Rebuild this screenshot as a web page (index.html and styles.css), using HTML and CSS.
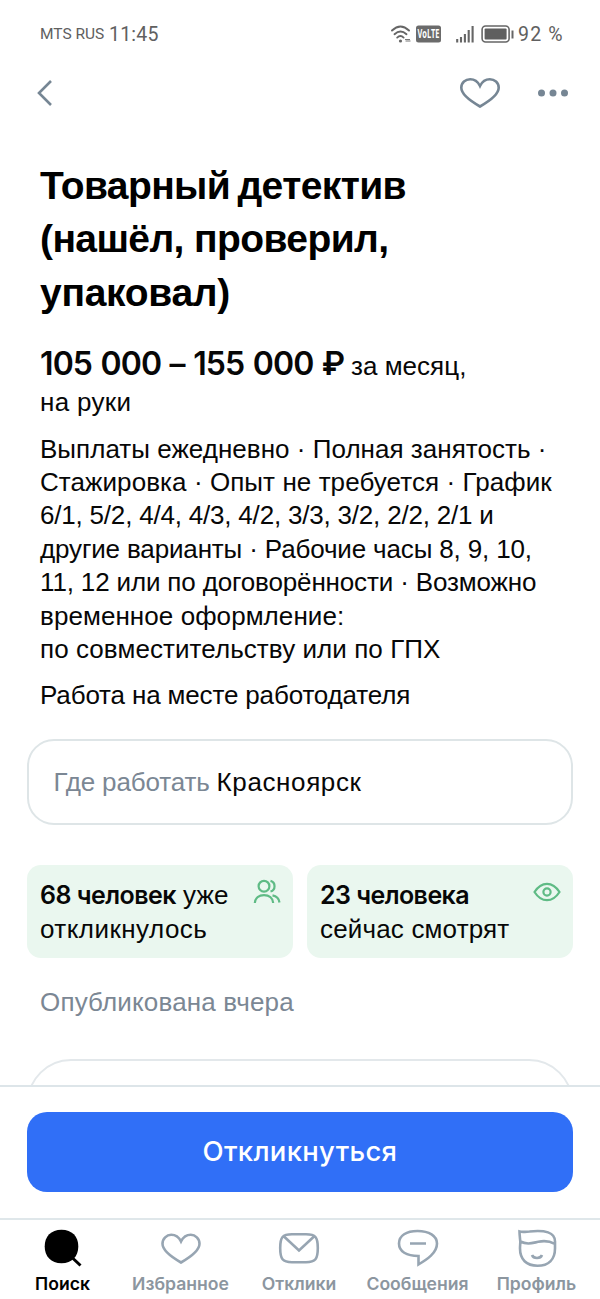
FILE: index.html
```
<!DOCTYPE html>
<html lang="ru">
<head>
<meta charset="utf-8">
<title>Товарный детектив</title>
<link rel="stylesheet" href="styles.css">
</head>
<body>
<div class="screen">
  <div class="scroll">
    <div class="status">
      <span class="carrier">MTS RUS</span>
      <span class="clock">11:45</span>
      <svg class="status-icons" width="126" height="20" viewBox="0 0 126 20">
        <g fill="none" stroke="#666" stroke-width="1.9" stroke-linecap="round">
          <path d="M2 6.500Q10.500-1.500 19 6.500"/>
          <path d="M4.500 10.200Q10.500 4.600 16.500 10.200"/>
          <path d="M7.200 13.600Q10.500 10.600 13.600 13.600"/>
        </g>
        <circle cx="10.500" cy="17" r="1.600" fill="#666"/>
        <path d="M15 15.500h5M15.500 17h5" stroke="#777" stroke-width="1.200"/>
        <rect x="26" y="1.500" width="25" height="17" rx="2.500" fill="#6b6b6b"/>
        <text class="volte" x="38.500" y="14" text-anchor="middle" textLength="22" lengthAdjust="spacingAndGlyphs">VoLTE</text>
        <path d="M67.200 18.500v-3.500M71 18.500v-5.500M74.900 18.500v-8.500M78.700 18.500V6M82.600 18.500V2" stroke="#666" stroke-width="2.100"/>
        <rect x="92.100" y="2" width="27" height="16" rx="3.500" fill="none" stroke="#666" stroke-width="1.600"/>
        <rect x="94.600" y="4.500" width="22" height="11" rx="1" fill="#5f5f5f"/>
        <path d="M122.500 6.500v8" stroke="#666" stroke-width="2"/>
      </svg>
      <span class="percent">92 %</span>
    </div>

    <div class="toolbar">
      <svg width="17" height="28" viewBox="0 0 17 28"><path d="M15 2 3 14l12 12" fill="none" stroke="#768694" stroke-width="2.600"/></svg>
      <svg class="like" width="42" height="32" viewBox="0 0 42 32"><path d="M21 29.500C14 25.500 2.300 18.600 2.300 10.800 2.300 5.500 6.500 2.300 11.200 2.300c4.300 0 7.800 2.700 9.800 6.700 2-4 5.500-6.700 9.800-6.700 4.700 0 8.900 3.200 8.900 8.500C39.700 18.600 28 25.500 21 29.500Z" fill="none" stroke="#768694" stroke-width="2.600"/></svg>
      <svg width="32" height="8" viewBox="0 0 32 8" fill="#768694"><circle cx="4.500" cy="4" r="3.500"/><circle cx="16" cy="4" r="3.500"/><circle cx="27.500" cy="4" r="3.500"/></svg>
    </div>

    <h1 class="title">
      <span class="line t1">Товарный детектив</span>
      <span class="line t2">(нашёл, проверил,</span>
      <span class="line t3">упаковал)</span>
    </h1>

    <div class="salary"><span class="amount">105 000 – 155 000 ₽</span><span class="s4">за месяц,</span></div>
    <div class="text s7">на руки</div>

    <p class="text terms">
      <span class="line s4">Выплаты ежедневно · Полная занятость ·</span>
      <span class="line s5">Стажировка · Опыт не требуется · График</span>
      <span class="line s1">6/1, 5/2, 4/4, 4/3, 4/2, 3/3, 3/2, 2/2, 2/1 и</span>
      <span class="line s2">другие варианты · Рабочие часы 8, 9, 10,</span>
      <span class="line s3">11, 12 или по договорённости · Возможно</span>
      <span class="line s5">временное оформление:</span>
      <span class="line s5">по совместительству или по ГПХ</span>
    </p>
    <p class="text place s3">Работа на месте работодателя</p>

    <div class="where text"><span class="muted s3">Где работать</span><span class="s10">Красноярск</span></div>

    <div class="stats text">
      <div class="stat">
        <div><div class="line"><b class="strong">68 человек</b> <span class="s5">уже</span></div><div class="line s8">откликнулось</div></div>
        <svg width="28" height="26" viewBox="0 0 28 26" fill="none" stroke="#5fbb85" stroke-width="2.200"><circle cx="11" cy="7.200" r="5.400"/><path d="M17.500 1.900a5.500 5.500 0 0 1 0 10.600M1.800 24c.4-5 4.200-7.800 9.200-7.800s8.800 2.800 9.200 7.800M19.500 16.300c4 .7 6.500 3.300 7 7.200"/></svg>
      </div>
      <div class="stat">
        <div><div class="line"><b class="strong">23 человека</b></div><div class="line s6">сейчас смотрят</div></div>
        <svg width="28" height="26" viewBox="0 0 28 26" fill="none" stroke="#5fbb85" stroke-width="2.200"><path d="M1.500 13C5 7.500 9 4.800 14 4.800S23 7.500 26.500 13C23 18.500 19 21.200 14 21.200S5 18.500 1.500 13Z"/><circle cx="14" cy="13" r="3.600"/></svg>
      </div>
    </div>

    <p class="text published muted s6">Опубликована вчера</p>
    <div class="next-card"></div>
  </div>

  <div class="action"><button class="apply">Откликнуться</button></div>

  <nav class="tabs">
    <a class="tab tab-search active">
      <svg width="40" height="38" viewBox="0 0 40 38"><path d="M18.500.8C29 .8 35.300 7.500 35.300 17.500S29 34.200 18.500 34.200 1.700 27.500 1.700 17.500 8 .8 18.500.8Z"/><path d="m29 28.500 8.500 8" stroke="#000" stroke-width="3"/></svg>
      <span>Поиск</span></a>
    <a class="tab tab-fav">
      <svg width="42" height="38" viewBox="0 0 42 38"><path d="M21 33.500C14 29.500 2.500 22.500 2.500 14.800 2.500 9.500 6.700 5.800 11.200 5.800c4.300 0 7.800 2.700 9.800 6.700 2-4 5.500-6.700 9.800-6.700 4.500 0 8.700 3.700 8.700 9C39.500 22.500 28 29.500 21 33.500Z"/></svg>
      <span>Избранное</span></a>
    <a class="tab tab-replies">
      <svg width="42" height="38" viewBox="0 0 42 38"><path d="M2.200 19C2.200 8 4.500 5.300 14 5.300h14C37.500 5.300 39.800 8 39.800 19S37.500 33.200 28 33.200H14C4.500 33.200 2.200 30 2.200 19ZM6 7.500l15 14 15-14"/></svg>
      <span>Отклики</span></a>
    <a class="tab tab-messages">
      <svg width="42" height="38" viewBox="0 0 42 38"><path d="M20.500 2C32 2 40 6.800 40 14.500 40 24 30 30.500 21.500 35.500V27C9.500 27 2 22.500 2 14.500S9.500 2 20.500 2ZM13 14.500h16"/></svg>
      <span>Сообщения</span></a>
    <a class="tab tab-profile">
      <svg width="42" height="38" viewBox="0 0 42 38"><path d="M3.500 2.500c3 .9 6.500.2 10 0C29 1 39 3 39 12.500v7C39 30.500 32.500 36.700 21.500 36.700S4 30.500 4 19.500c0-2.500.3-4.500.3-7C4 9 3.500 6 3.500 2.500ZM4.300 12.500c7 3.500 12 1.500 18 .3 6-1.300 11.200-.8 16.500 2M16 26c1.500 4 8.500 4 10 0"/></svg>
      <span>Профиль</span></a>
  </nav>
</div>
</body>
</html>
```
FILE: styles.css
```
* { box-sizing: border-box; }

body {
  margin: 0;
  background: #fff;
  color: #070707;
  font-family: "Liberation Sans", Arial, sans-serif;
}

.screen { width: 600px; height: 1299px; display: flex; flex-direction: column; overflow: hidden; }
.scroll { height: 1085px; overflow: hidden; flex: none; }
svg { display: block; flex: none; }

/* Status bar */
.status { display: flex; align-items: center; height: 68px; padding-left: 40px; color: #606060; font-family: Roboto, sans-serif; white-space: nowrap; }
.carrier { width: 69px; font-size: 15.5px; }
.clock { width: 281px; font-size: 19.5px; letter-spacing: .2px; }
.status-icons { width: 126px; }
.percent { padding-left: 2px; font-size: 19.5px; letter-spacing: 1.2px; }
.volte { font: 700 12px "Open Sans", sans-serif; fill: #fff; }

.toolbar { display: flex; align-items: center; height: 50.5px; padding: 0 31px 0 36px; }
.like { margin: 0 36px 0 auto; }

.line { display: block; white-space: nowrap; }

.title { margin: 40.2px 0 0; padding-left: 40px; font-size: 39px; line-height: 53.5px; font-weight: 700; color: #000; }
.t1 { letter-spacing: -.6px; word-spacing: -3px; }
.t2 { letter-spacing: -.6px; }
.t3 { letter-spacing: -.3px; }

.salary { display: flex; align-items: baseline; height: 39px; margin-top: 25.4px; padding-left: 40px; font-size: 26px; line-height: 37px; white-space: nowrap; }
.amount { width: 311px; font: 600 32px/37px Inter, sans-serif; letter-spacing: -.9px; word-spacing: 1.3px; }

.text { padding-left: 40px; font-size: 26px; line-height: 33.4px; }
.salary + .text { margin-top: 2px; }
.terms { margin: 13.6px 0 0; }
.place { margin: 12.8px 0 0; }
.muted { color: #7b8794; }

/* Tracking steps */
.s1 { letter-spacing: -.2px; }
.s2 { letter-spacing: -.15px; }
.s3 { letter-spacing: -.15px; }
.s4 { letter-spacing: .03px; }
.s5 { letter-spacing: .07px; }
.s6 { letter-spacing: .17px; }
.s7 { letter-spacing: .3px; }
.s8 { letter-spacing: .46px; }
.s10 { letter-spacing: .62px; }

.where { display: flex; align-items: center; gap: 7px; height: 86px; margin: 26px 27px 0; padding: 1.5px 0 0 24.5px; border: 2px solid #dee5e7; border-radius: 27px; }

.stats { display: flex; gap: 14px; margin-top: 40px; padding: 0 27px; }
.stat { display: flex; flex: 1; justify-content: space-between; height: 93.5px; padding: 14.8px 12px 0 13px; border-radius: 14px; background: #eaf7ef; }
.stat svg { margin-top: -.3px; }
.strong { font: 600 25px/33px Inter, sans-serif; letter-spacing: -.55px; }

.published { margin: 27.6px 0 0; }
.next-card { height: 100px; margin: 40px 27px 0; border: 2px solid #e3e8eb; border-radius: 44px; }

/* Bottom action */
.action { height: 133px; flex: none; padding: 24.5px 27px 0; border-top: 2px solid #dde5e9; background: #fff; }
.apply { display: block; width: 100%; height: 80px; padding: 0; border: 0; border-radius: 20px; background: #306ff7; color: #fff; font: 500 27.5px/79px Inter, sans-serif; letter-spacing: .3px; }

/* Tab bar */
.tabs { display: flex; height: 81px; flex: none; border-top: 2px solid #dfe7ea; color: #8c969f; font: 600 17.6px/22px Inter, sans-serif; }
.tab { display: flex; flex-direction: column; align-items: center; gap: 5.5px; padding-top: 9px; white-space: nowrap; }
.tab svg { fill: none; stroke: #97a5b2; stroke-width: 2.6; }
.tab.active { color: #000; }
.tab.active svg { fill: #000; stroke: none; }
.tab-search { width: 125px; }
.tab-fav { width: 111px; }
.tab-replies { width: 126px; }
.tab-messages { width: 111px; }
.tab-profile { width: 127px; }
```
